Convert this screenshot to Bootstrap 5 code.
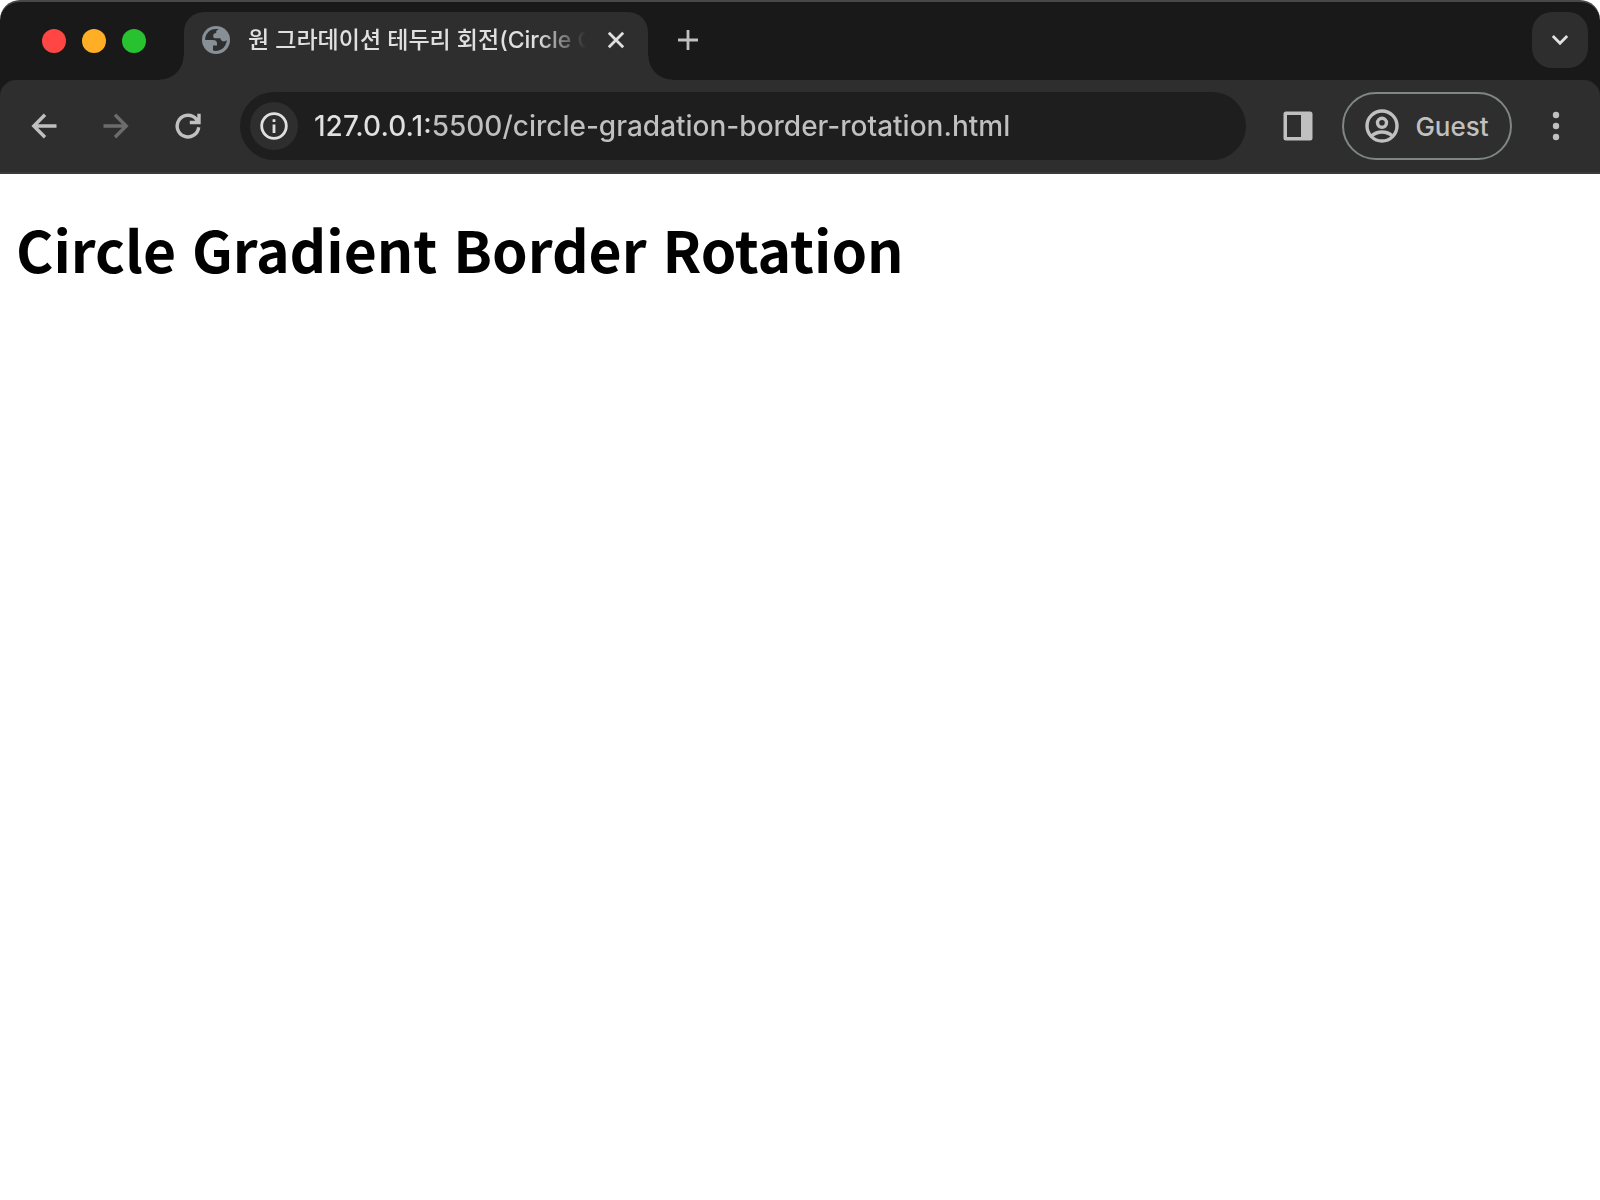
<!DOCTYPE html>
<html lang="ko">
<head>
<meta charset="utf-8">
<meta name="viewport" content="width=device-width, initial-scale=1">
<title>원 그라데이션 테두리 회전(Circle Gradient Border Rotation)</title>
<link href="https://cdn.jsdelivr.net/npm/bootstrap@5.3.0/dist/css/bootstrap.min.css" rel="stylesheet">
<style>
  :root { --strip: #191919; --bar: #2e2e2e; --field: #1e1e1e; --ink: #c0c0c0; --bright: #e0e0e0; }
  body { font-family: Inter, "Noto Sans CJK KR", sans-serif; background: #fff; }
  .browser-top { background: var(--strip); border-top: 2px solid #484848; border-radius: 20px 20px 0 0; }
  .tab-strip { height: 78px; padding: 0 12px 0 42px; }
  .light { width: 24px; height: 24px; border-radius: 50%; padding: 0; border: 0; }
  .light-close { background: #ff4644; }
  .light-min { background: #ffae26; }
  .light-max { background: #28c231; }
  .page-tab { position: relative; width: 464px; height: 68px; margin-left: 38px; padding: 0 18px 12px; background: var(--bar); border-radius: 20px 20px 0 0; }
  .page-tab::before, .page-tab::after { content: ""; position: absolute; bottom: 0; width: 24px; height: 24px; }
  .page-tab::before { right: 100%; background: radial-gradient(circle at 0 0, transparent 23px, var(--bar) 24px); }
  .page-tab::after { left: 100%; background: radial-gradient(circle at 100% 0, transparent 23px, var(--bar) 24px); }
  .tab-title { color: var(--bright); font-size: 23px; font-weight: 500; line-height: 32px; margin-left: 18px; width: 338px; overflow: hidden; white-space: nowrap;
    -webkit-mask-image: linear-gradient(90deg, #000 290px, transparent 338px); mask-image: linear-gradient(90deg, #000 290px, transparent 338px); }
  .tool { display: flex; align-items: center; justify-content: center; padding: 0; border: 0; background: none; color: var(--ink); flex: none; }
  .tool:disabled { color: #6c6c6c; }
  .tool-bright { color: var(--bright); }
  .new-tab { width: 80px; height: 56px; margin: 0 0 2px; }
  .tab-search { width: 56px; height: 56px; border-radius: 20px; background: var(--bar); margin-bottom: 2px; }
  .tool-bar { height: 94px; padding: 0 20px; background: var(--bar); border-bottom: 2px solid #393939; border-radius: 16px 16px 0 0; }
  .nav-group { gap: 24px; }
  .side-group { gap: 20px; margin-left: 28px; }
  .nav-tool { width: 48px; height: 48px; }
  .address { height: 68px; margin-left: 28px; padding: 0 34px 0 10px; background: var(--field); border-radius: 34px; }
  .site-info { width: 48px; height: 48px; border-radius: 50%; background: var(--bar); }
  .url { border: 0; outline: 0; padding: 0; margin-left: 16px; width: 100%; height: 48px; font-size: 28px; font-weight: 500;
    background: linear-gradient(90deg, var(--bright) 117px, var(--ink) 117px); -webkit-background-clip: text; background-clip: text; color: transparent; }
  .guest { width: 170px; height: 68px; border: 2px solid #7f8685; border-radius: 34px; font-size: 26px; font-weight: 500; gap: 16px; }
  .page-heading { font-family: "Noto Sans CJK KR", sans-serif; font-weight: 700; font-size: 57px; line-height: 76px; color: #000; }
  .page-body { padding: 36px 16px; }
</style>
<script src="https://cdn.jsdelivr.net/npm/bootstrap@5.3.0/dist/js/bootstrap.bundle.min.js"></script>
</head>
<body>
<header class="browser-top">
  <div class="tab-strip d-flex align-items-center">
    <div class="d-flex gap-3">
      <button class="light light-close" aria-label="Close window"></button>
      <button class="light light-min" aria-label="Minimize"></button>
      <button class="light light-max" aria-label="Zoom"></button>
    </div>
    <div class="page-tab d-flex align-items-center align-self-end">
      <svg width="28" height="28" viewBox="0 0 28 28" class="flex-shrink-0">
        <circle cx="14" cy="14" r="14" fill="#879097"/>
        <path fill="#2e2e2e" d="M17 3.400C14.800 2.700 11.600 2.800 9 4C5.800 5.500 3.600 8.700 3.200 12.500V14H11C13.300 14 14.800 15.200 15 17V19.500H11V24.600C16 25.800 20.500 23.800 23 19.800C24.200 17.800 24.800 15.800 24.700 14C24.200 14.900 23.200 15.400 22 15.400C20 15.400 18.800 14.400 18.300 12.300H13C11.600 12.300 11.200 11.200 11.200 9.800C11.200 8 12.200 7.200 14.200 7V5.800C14.200 4.500 15.300 3.600 17 3.400Z"/>
      </svg>
      <div class="tab-title">원 그라데이션 테두리 회전(Circle Gradient Border Rotation)</div>
      <button class="tool tool-bright ms-auto" aria-label="Close tab">
        <svg width="28" height="28" viewBox="0 0 28 28" fill="none" stroke="currentColor" stroke-width="2.800"><path d="M6.800 6.800 21.200 21.200M21.200 6.800 6.800 21.200"/></svg>
      </button>
    </div>
    <button class="tool new-tab" aria-label="New tab">
      <svg width="20" height="20" viewBox="0 0 20 20" fill="none" stroke="currentColor" stroke-width="2.800"><path d="M10 0V20M0 10H20"/></svg>
    </button>
    <button class="tool tool-bright tab-search ms-auto" aria-label="Search tabs">
      <svg width="18" height="12" viewBox="0 0 18 12" fill="none" stroke="currentColor" stroke-width="2.800"><path d="M1.800 2 9 9.200 16.200 2"/></svg>
    </button>
  </div>

  <div class="tool-bar d-flex align-items-center">
    <nav class="nav-group d-flex">
      <button class="tool nav-tool" aria-label="Back">
        <svg width="26" height="26" viewBox="0 0 26 26" fill="none" stroke="currentColor" stroke-width="3.400"><path d="M25.500 13H3M14 1.800 2.800 13 14 24.200"/></svg>
      </button>
      <button class="tool nav-tool" aria-label="Forward" disabled>
        <svg width="26" height="26" viewBox="0 0 26 26" fill="none" stroke="currentColor" stroke-width="3.400"><path d="M.500 13H23M12 1.800 23.200 13 12 24.200"/></svg>
      </button>
      <button class="tool nav-tool" aria-label="Reload">
        <svg width="26" height="26" viewBox="0 0 26 26" fill="none" stroke="currentColor" stroke-width="3.400"><path d="M23.700 14.200A10.800 10.800 0 1 1 21.300 6.200L23.500 9.200M24 .800V9.500H14.800"/></svg>
      </button>
    </nav>
    <div class="address d-flex align-items-center flex-grow-1">
      <button class="tool tool-bright site-info" aria-label="View site information">
        <svg width="28" height="28" viewBox="0 0 28 28" fill="none" stroke="currentColor" stroke-width="2.800"><circle cx="14" cy="14" r="12.300"/><path d="M14 12.500V21M14 7.200V10"/></svg>
      </button>
      <input class="url" type="text" aria-label="Address" value="127.0.0.1:5500/circle-gradation-border-rotation.html" spellcheck="false">
    </div>
    <div class="side-group d-flex align-items-center">
      <button class="tool nav-tool" aria-label="Side panel">
        <svg width="30" height="30" viewBox="0 0 30 30"><path fill="currentColor" fill-rule="evenodd" d="M3 .500H27Q29.500 .500 29.500 3V27Q29.500 29.500 27 29.500H3Q.500 29.500 .500 27V3Q.500 .500 3 .500ZM4 4V26H18V4Z"/></svg>
      </button>
      <button class="tool guest">
        <svg width="34" height="34" viewBox="0 0 34 34" fill="none" stroke="currentColor" stroke-width="3.400"><circle cx="17" cy="17" r="15"/><circle cx="17" cy="13.800" r="4.500"/><path d="M6.500 27C12.500 21.600 21.500 21.600 27.500 27"/></svg>
        Guest
      </button>
      <button class="tool nav-tool" aria-label="Menu">
        <svg width="8" height="30" viewBox="0 0 8 30" fill="currentColor"><circle cx="4" cy="4" r="3.200"/><circle cx="4" cy="15" r="3.200"/><circle cx="4" cy="26" r="3.200"/></svg>
      </button>
    </div>
  </div>
</header>
<main class="page-body">
  <h1 class="page-heading m-0">Circle Gradient Border Rotation</h1>
</main>
</body>
</html>
